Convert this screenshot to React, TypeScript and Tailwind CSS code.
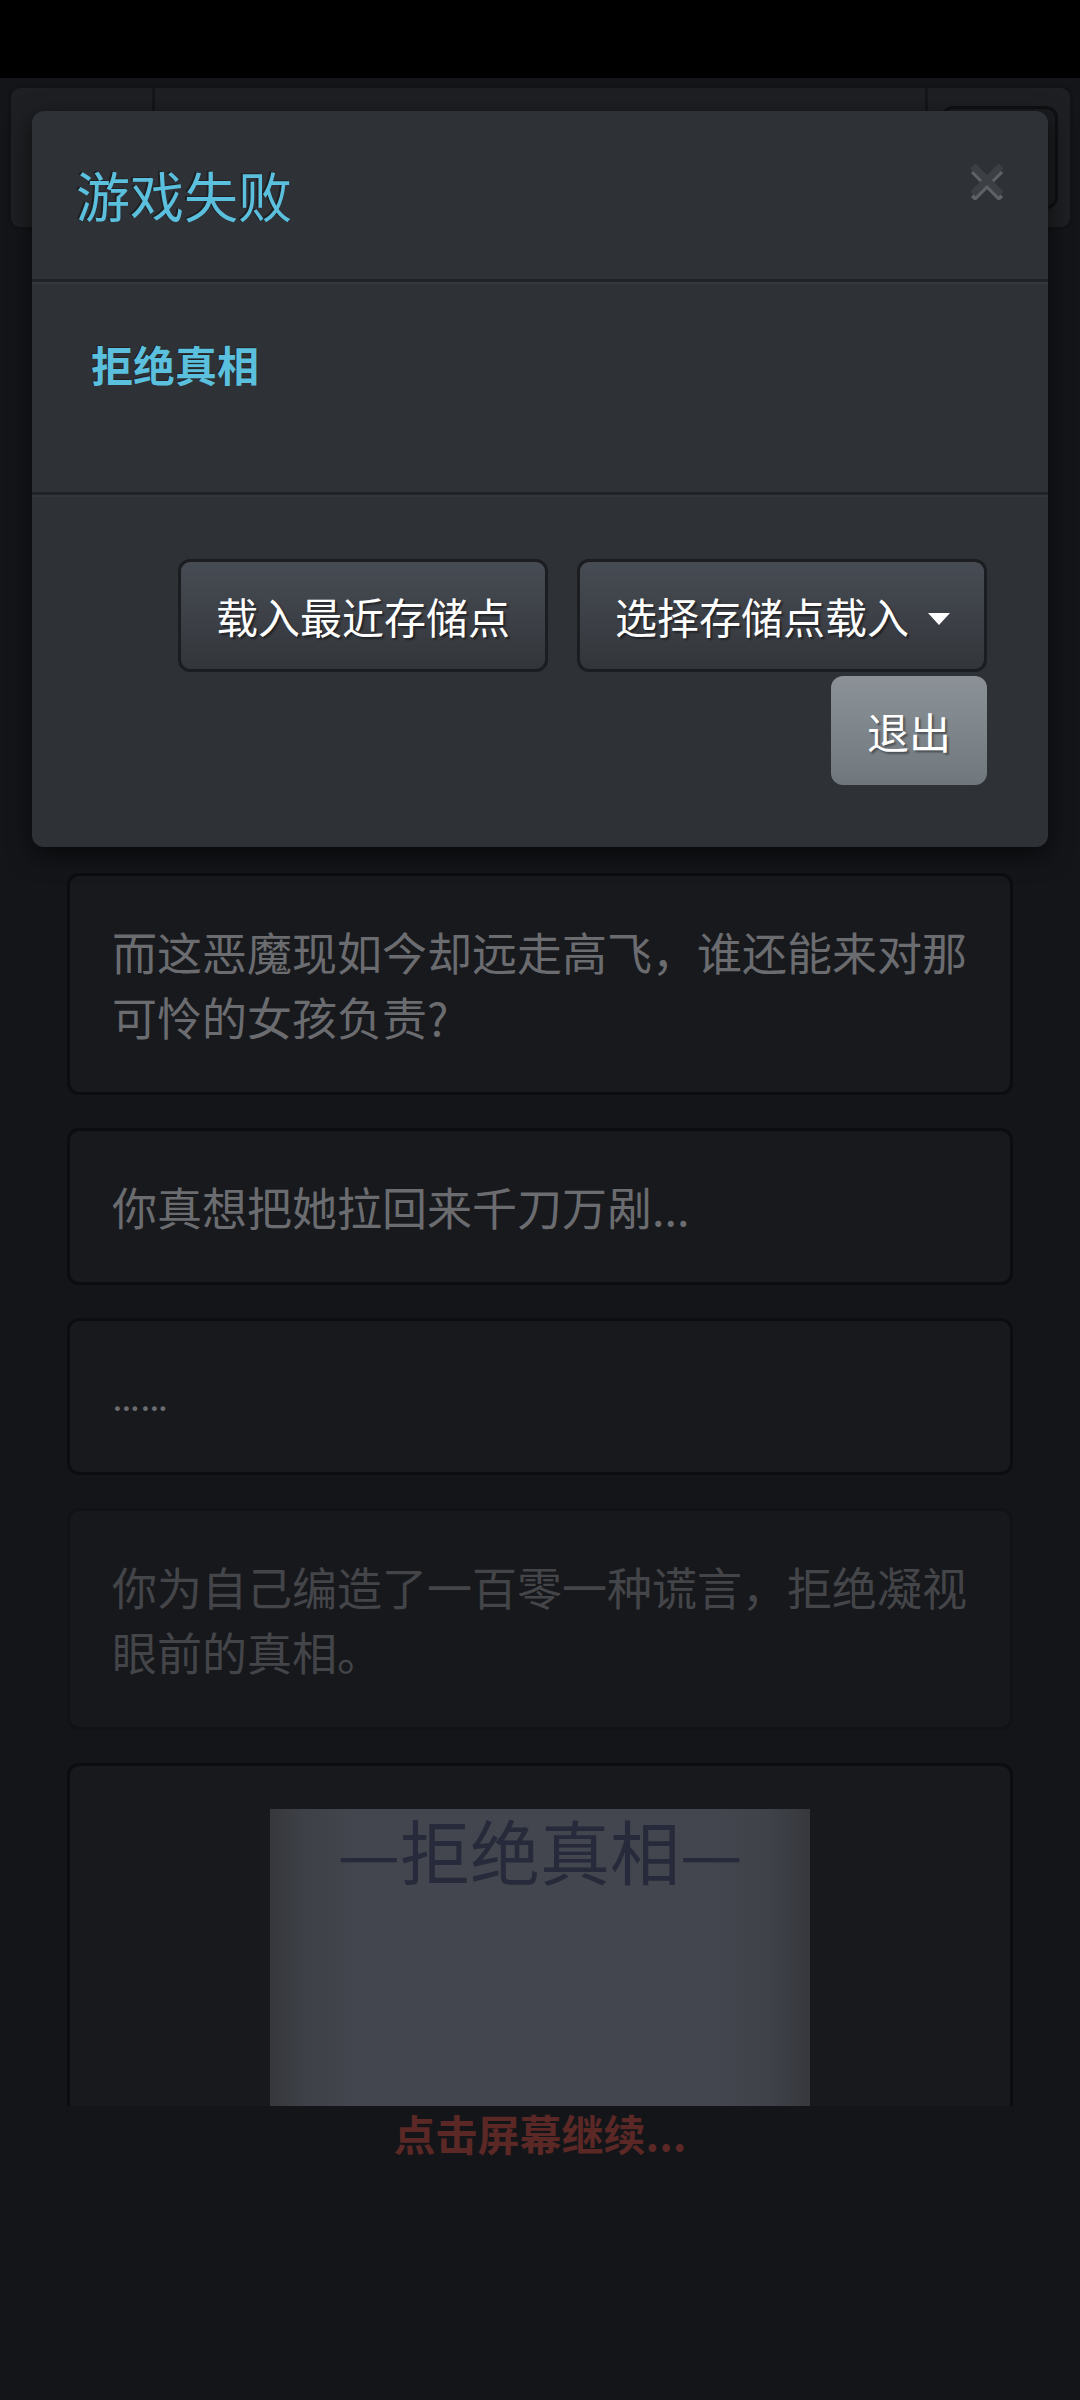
import React from "react";

const cjk = "font-['Noto_Sans_CJK_SC','Noto_Sans',sans-serif]";

function StoryCard({
  children,
  faded = false,
}: {
  children: React.ReactNode;
  faded?: boolean;
}) {
  return (
    <div
      className={
        faded
          ? "shrink-0 rounded-[12px] border-[3px] border-[#111215] bg-[#17181c] px-[42px] py-[43px] text-[45px] leading-[65px] text-[#444549]"
          : "shrink-0 rounded-[12px] border-[3px] border-[#0c0d0f] bg-[#18191d] px-[42px] py-[43px] text-[45px] leading-[65px] text-[#6b6c70]"
      }
    >
      {children}
    </div>
  );
}

function CloseIcon() {
  return (
    <svg width="34" height="36" viewBox="0 0 34 36" aria-hidden="true">
      <g stroke="#5e6266" strokeWidth="6" strokeLinecap="butt">
        <line x1="3" y1="7" x2="31" y2="35" />
        <line x1="31" y1="7" x2="3" y2="35" />
      </g>
      <g stroke="#3c4044" strokeWidth="7" strokeLinecap="butt">
        <line x1="3" y1="2" x2="31" y2="30" />
        <line x1="31" y1="2" x2="3" y2="30" />
      </g>
    </svg>
  );
}

export default function App() {
  return (
    <div className={`relative w-[1080px] min-h-[2400px] overflow-hidden bg-[#141519] ${cjk}`}>
      {/* status bar */}
      <div className="h-[78px] bg-black" />

      {/* top navigation (under backdrop) */}
      <div className="px-[8px] pt-[7px]">
        <div className="flex h-[145px] w-[1065px] rounded-[12px] border-[3px] border-[#121316] bg-[#1d1f22]">
          <div className="w-[144px] border-r-[3px] border-[#141618]" />
          <div className="flex-1 border-r-[3px] border-[#141618]" />
          <div className="flex w-[142px] items-center justify-center">
            <div className="h-[103px] w-[117px] rounded-[12px] border-[3px] border-[#0f1012] bg-[#1a1c1f]" />
          </div>
        </div>
      </div>

      {/* story log */}
      <div className="flex h-[1876px] flex-col gap-[33px] overflow-hidden px-[67px] pt-[643px]">
        <StoryCard>
          而这恶魔现如今却远走高飞，谁还能来对那可怜的女孩负责?
        </StoryCard>
        <StoryCard>你真想把她拉回来千刀万剐...</StoryCard>
        <StoryCard>
          <div className="font-['Roboto','Liberation_Sans',sans-serif] text-[42px] leading-[65px]">……</div>
        </StoryCard>
        <StoryCard faded>
          你为自己编造了一百零一种谎言，拒绝凝视眼前的真相。
        </StoryCard>
        <div className="shrink-0 rounded-[12px] border-[3px] border-[#0c0d0f] bg-[#18191d] px-[42px] pt-[43px]">
          <div className="mx-auto h-[720px] w-[540px] bg-[linear-gradient(90deg,#35373c_0%,#3d4046_6%,#43464e_16%,#43464e_82%,#3f4249_92%,#36383d_100%)] pt-[6px] text-center text-[70px] leading-[70px] text-[#262a3a]">
            —拒绝真相—
          </div>
        </div>
      </div>

      {/* continue hint */}
      <div className="flex h-[54px] items-center justify-center text-[42px] font-bold leading-[52px] text-[#5b2826]">
        点击屏幕继续...
      </div>

      {/* game over dialog */}
      <div className="absolute left-[32px] top-[111px] w-[1016px] rounded-[12px] bg-[#2e3236] shadow-[0_8px_24px_rgba(0,0,0,0.6)]">
        <div className="flex h-[171px] items-center justify-between border-b-[3px] border-[#1f2226] px-[44px] shadow-[0_2px_0_0_#34383c]">
          <h4 className="text-[54px] font-normal leading-[54px] text-[#5bc0de] [text-shadow:-2px_-1px_0_rgba(0,0,0,0.35)]">
            游戏失败
          </h4>
          <button className="mb-[27px] flex h-[36px] w-[34px] items-center justify-center">
            <CloseIcon />
          </button>
        </div>

        <div className="border-b-[3px] border-[#1f2226] px-[59px] pb-[98px] pt-[52px] shadow-[0_2px_0_0_#34383c]">
          <h4 className="text-[42px] font-bold leading-[60px] text-[#5bc0de] [text-shadow:-1px_-1px_0_rgba(0,0,0,0.3)]">
            拒绝真相
          </h4>
        </div>

        <div className="flex flex-wrap justify-end gap-x-[29px] gap-y-[4px] px-[61px] pb-[62px] pt-[64px]">
          <button className="flex h-[113px] items-center rounded-[12px] border-[3px] border-[#1b1d20] bg-[linear-gradient(#474b53,#3b3f45_60%,#323539)] px-[35px] text-[42px] leading-[60px] text-white [text-shadow:2px_2px_2px_rgba(0,0,0,0.45)]">
            载入最近存储点
          </button>
          <button className="flex h-[113px] items-center rounded-[12px] border-[3px] border-[#1b1d20] bg-[linear-gradient(#474b53,#3b3f45_60%,#323539)] pl-[35px] pr-[34px] text-[42px] leading-[60px] text-white [text-shadow:2px_2px_2px_rgba(0,0,0,0.45)]">
            选择存储点载入
            <span className="ml-[19px] mt-[6px] h-0 w-0 border-l-[11px] border-r-[11px] border-t-[12px] border-l-transparent border-r-transparent border-t-white" />
          </button>
          <button className="flex h-[109px] items-center rounded-[12px] bg-[linear-gradient(#8b9197,#7b8389_60%,#6f767c)] px-[36px] text-[42px] leading-[60px] text-white [text-shadow:2px_2px_2px_rgba(0,0,0,0.4)]">
            退出
          </button>
        </div>
      </div>
    </div>
  );
}
